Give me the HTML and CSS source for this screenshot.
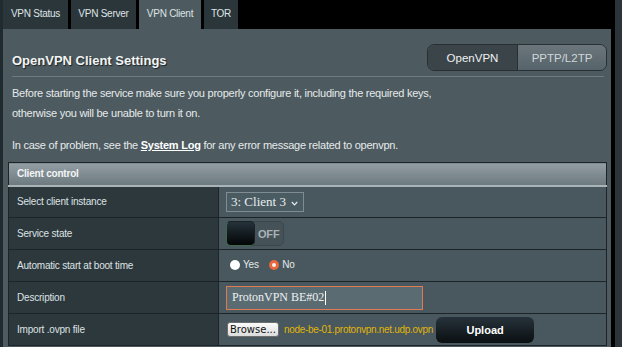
FILE: index.html
```html
<!DOCTYPE html>
<html lang="en">
<head>
  <meta charset="UTF-8" />
  <title>OpenVPN Client Settings</title>
  <link rel="stylesheet" href="styles.css">
</head>
<body>
  <div class="frame">
    <div class="edge-left"></div>

    <div class="main">
      <!-- Tabs -->
      <div class="tabs">
        <div class="tab">VPN Status</div>
        <div class="tab">VPN Server</div>
        <div class="tab active">VPN Client</div>
        <div class="tab">TOR</div>
      </div>

      <div class="panel">
        <div class="panel-head">
          <h1>OpenVPN Client Settings</h1>
          <div class="switcher">
            <span class="seg on">OpenVPN</span>
            <span class="seg">PPTP/L2TP</span>
          </div>
        </div>
        <div class="divider"></div>

        <p class="note">Before starting the service make sure you properly configure it, including the required keys,<br>otherwise you will be unable to turn it on.</p>
        <p class="note">In case of problem, see the <a href="#">System Log</a> for any error message related to openvpn.</p>

        <!-- Client control -->
        <table class="settings">
          <thead>
            <tr><th colspan="2">Client control</th></tr>
          </thead>
          <tbody>
            <tr>
              <td class="label">Select client instance</td>
              <td class="value">
                <div class="select">3: Client 3
                  <svg class="chev" width="7" height="5" viewBox="0 0 7 5"><path d="M0.8 1 L3.5 3.8 L6.2 1" fill="none" stroke="#e8ecee" stroke-width="1.2"/></svg>
                </div>
              </td>
            </tr>
            <tr>
              <td class="label">Service state</td>
              <td class="value">
                <div class="toggle"><span class="knob"></span><span class="off">OFF</span></div>
              </td>
            </tr>
            <tr>
              <td class="label">Automatic start at boot time</td>
              <td class="value">
                <label class="radio"><span class="dot"></span>Yes</label>
                <label class="radio"><span class="dot checked"></span>No</label>
              </td>
            </tr>
            <tr>
              <td class="label">Description</td>
              <td class="value">
                <div class="text-input">ProtonVPN BE#02<span class="caret"></span></div>
              </td>
            </tr>
            <tr>
              <td class="label">Import .ovpn file</td>
              <td class="value">
                <div class="file-row">
                  <span class="browse">Browse...</span>
                  <span class="filename">node-be-01.protonvpn.net.udp.ovpn</span>
                  <span class="upload">Upload</span>
                </div>
              </td>
            </tr>
          </tbody>
        </table>
      </div>
    </div>

    <div class="gap"></div>
    <div class="edge-right"></div>
  </div>
</body>
</html>
```
FILE: styles.css
```css
* {
  box-sizing: border-box;
}
html, body {
  margin: 0;
  height: 100%;
  background: #000;
  overflow: hidden;
}
body {
  font-family: 'Liberation Sans', Arial, sans-serif;
  color: #e4e8ea;
}

.frame {
  display: flex;
  height: 347px;
}
.edge-left {
  width: 3px;
  background: #1f2b2f;
}
.main {
  width: 608px;
  display: flex;
  flex-direction: column;
}
.gap {
  width: 4px;
  background: #000;
}
.edge-right {
  flex: 1;
  background: #2b3539;
}

/* Tabs */
.tabs {
  display: flex;
  gap: 3px;
  height: 29px;
  background: #000;
}
.tab {
  height: 29px;
  background: #2b363a;
  font-size: 10px;
  letter-spacing: -0.25px;
  line-height: 27px;
  text-align: center;
  white-space: nowrap;
  color: #dfe4e6;
}
.tab:nth-child(1) { width: 65px; }
.tab:nth-child(2) { width: 65px; }
.tab:nth-child(3) { width: 62px; }
.tab:nth-child(4) { width: 34px; }
.tab.active {
  background: #4d5a5f;
}

/* Panel */
.panel {
  flex: 1;
  background: #4d5a5f;
  padding: 0 4px 0 5px;
}
.panel-head {
  display: flex;
  justify-content: space-between;
  align-items: flex-start;
  height: 47px;
  padding: 15px 0 0 4px;
}
h1 {
  margin: 9px 0 0;
  font-size: 13px;
  line-height: 15px;
  font-weight: bold;
  color: #f2f4f5;
  text-shadow: 1px 1px 1px #1b2326;
}
.switcher {
  display: flex;
  width: 180px;
  height: 27px;
  border: 1px solid #283034;
  border-radius: 7px;
  overflow: hidden;
  font-size: 11.5px;
}
.seg {
  flex: 1;
  display: flex;
  align-items: center;
  justify-content: center;
  background: linear-gradient(#6a767b, #56636a);
  color: #cfd6d9;
}
.seg.on {
  flex: 0 0 90px;
  background: #3b4549;
  border-right: 1px solid #283034;
  color: #eef1f2;
}
.divider {
  height: 1px;
  margin: 0 3px 0 4px;
  background: #6f7b80;
}

.note {
  margin: 6px 0 0 4px;
  font-size: 11px;
  letter-spacing: -0.25px;
  line-height: 20px;
  color: #e6eaec;
}
.note + .note {
  margin-top: 12px;
}
.note a {
  color: #fff;
  font-weight: bold;
  text-decoration: underline;
}

/* Settings table */
.settings {
  width: 100%;
  margin-top: 7px;
  border-collapse: collapse;
  border: 1px solid #1c2427;
}
.settings th {
  height: 23px;
  padding: 0 8px;
  text-align: left;
  font-size: 10px;
  letter-spacing: -0.2px;
  font-weight: bold;
  color: #f3f5f6;
  background: linear-gradient(#929ea3, #6c797e);
  border-bottom: 2px solid #a9b4b8;
}
.settings td {
  height: 32px;
  border-top: 1px solid #1c2427;
  border-bottom: 1px solid #1c2427;
  font-size: 10px;
  letter-spacing: -0.2px;
}
.label {
  width: 210px;
  padding: 0 8px;
  background: #2d383c;
  color: #dde2e4;
  border-right: 1px solid #1c2427;
}
.value {
  padding: 0 7px;
  background: #48585e;
}

.select {
  display: inline-flex;
  align-items: center;
  width: 78px;
  height: 20px;
  padding: 0 0 0 4px;
  border: 1px solid #7f8d92;
  background: #4a5c62;
  font-family: 'Liberation Serif', serif;
  font-size: 13px;
  letter-spacing: 0;
  color: #e8ecee;
}
.chev {
  margin: 3px 0 0 5px;
}

.toggle {
  display: flex;
  align-items: center;
  width: 58px;
  height: 25px;
  border: 1px solid #3c474b;
  border-radius: 5px;
  background: #455358;
}
.knob {
  width: 29px;
  height: 25px;
  margin: -1px 0 0 -1px;
  border-radius: 5px;
  background: linear-gradient(#26323a, #020506);
  border: 1px solid #1a2226;
  border-left-color: #3c6b4a;
  border-bottom-color: #3c6b4a;
}
.off {
  margin-left: 3px;
  font-size: 11px;
  font-weight: bold;
  color: #a9b2b6;
}

.radio {
  display: inline-flex;
  align-items: center;
  margin-left: 4px;
  margin-right: 4px;
  color: #e4e8ea;
}
.dot {
  width: 10px;
  height: 10px;
  margin-right: 3px;
  border-radius: 50%;
  background: #fff;
}
.dot.checked {
  background: #f2f2f2;
  border: 3px solid #e6683c;
}

.text-input {
  display: flex;
  align-items: center;
  width: 197px;
  height: 24px;
  padding-left: 5px;
  border: 1px solid #e07a52;
  background: #5a6b72;
  font-family: 'Liberation Serif', serif;
  font-size: 12px;
  letter-spacing: 0;
  color: #eef1f2;
}
.caret {
  width: 1px;
  height: 14px;
  margin-left: 1px;
  background: #fff;
}

.file-row {
  display: flex;
  align-items: center;
  letter-spacing: 0;
}
.browse {
  height: 15px;
  padding: 0 2px;
  margin-left: 1px;
  border: 1px solid #6d6d6d;
  border-radius: 3px;
  background: linear-gradient(#fafafa, #dcdcdc);
  font-family: 'DejaVu Sans', sans-serif;
  font-size: 10px;
  line-height: 13px;
  color: #111;
}
.filename {
  margin-left: 5px;
  font-size: 10px;
  letter-spacing: -0.3px;
  color: #e0b40a;
}
.upload {
  width: 98px;
  height: 26px;
  margin-left: 3px;
  border-radius: 6px;
  background: linear-gradient(#26323a, #0a0f11);
  text-align: center;
  line-height: 26px;
  font-size: 11px;
  font-weight: bold;
  color: #fff;
}
```
